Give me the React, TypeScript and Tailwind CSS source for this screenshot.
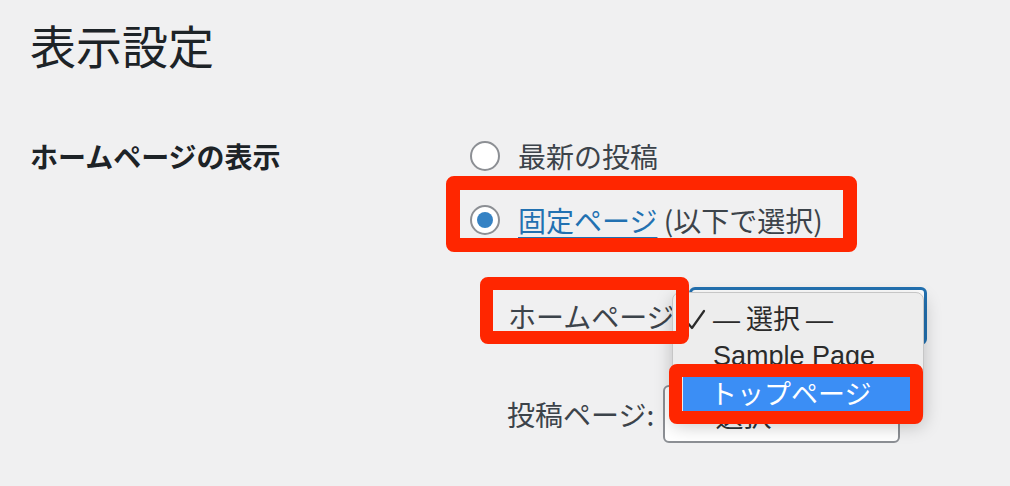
import React from 'react';

const jp = { fontFamily: '"Noto Sans CJK JP", "Noto Sans", sans-serif' };
const menuFont = { fontFamily: '"Liberation Sans", "Noto Sans CJK JP", sans-serif' };

const Radio = ({ checked }: { checked?: boolean }) => (
  <span className="flex h-[30px] w-[30px] shrink-0 items-center justify-center rounded-full border-2 border-[#8c8f94] bg-white">
    {checked && <span className="h-[16px] w-[16px] rounded-full bg-[#3582c4]" />}
  </span>
);

const Highlight = ({ className }: { className: string }) => (
  <div className={`pointer-events-none absolute rounded-[8px] border-[#ff2600] ${className}`} />
);

// full-width dash, as the mac system font draws it
const Dash = () => <span className="font-['Liberation_Sans']">—</span>;

const Choose = () => (
  <span className="whitespace-pre">
    <Dash /> 選択 <Dash />
  </span>
);

export default function App() {
  return (
    <div className="relative h-[486px] w-[1010px] overflow-hidden bg-[#f0f0f1] text-[#3c434a]" style={jp}>
      <div className="pl-[30px] pt-[21px]">
        <h1 className="text-[46px] leading-[46px] font-normal text-[#1d2327]">表示設定</h1>

        <div className="mt-[59px] flex">
          <div className="w-[440px] shrink-0 text-[28px] leading-[60px] font-bold text-[#1d2327]">ホームページの表示</div>

          <div className="flex flex-col">
            <label className="flex h-[60px] items-center gap-[18px] text-[28px]">
              <Radio />
              <span>最新の投稿</span>
            </label>
            <label className="flex h-[68px] items-center gap-[18px] text-[28px]">
              <Radio checked />
              <span>
                <a className="text-[#2271b1] underline underline-offset-[5px]">固定ページ</a> (以下で選択)
              </span>
            </label>

            <div className="ml-[38px] mt-[33px] flex items-center gap-[7px] text-[28px]">
              <span>ホームページ:</span>
              <div className="flex h-[58px] w-[238px] items-center rounded-[6px] border-[3px] border-[#2271b1] bg-white pl-[14px]">
                <Choose />
              </div>
            </div>

            <div className="ml-[37px] mt-[40px] flex items-center gap-[9px] text-[28px]">
              <span>投稿ページ:</span>
              <div className="flex h-[58px] w-[237px] items-center rounded-[6px] border-2 border-[#8c8f94] bg-white pl-[16px] pt-[4px] text-[#2c3338]">
                <Choose />
              </div>
            </div>
          </div>
        </div>
      </div>

      {/* open dropdown list */}
      <div
        className="absolute left-[672px] top-[292px] w-[252px] rounded-[8px] border border-[#c6c6c6] bg-[#ededed] pt-[8px] pb-[7px] text-[27px] text-[#2b2b2b] shadow-[0_6px_18px_rgba(0,0,0,0.22)]"
        style={menuFont}
      >
        <div className="relative flex h-[37px] items-center pl-[40px]">
          <svg className="absolute left-[10px] top-[7px]" width="24" height="24" viewBox="0 0 24 24" fill="none">
            <path d="M3 13 L9 20 L21 3" stroke="#2b2b2b" strokeWidth="2.2" strokeLinecap="round" strokeLinejoin="round" />
          </svg>
          <span style={jp}>
            <Choose />
          </span>
        </div>
        <div className="flex h-[37px] items-center pl-[40px]">Sample Page</div>
        <div className="mx-[10px] flex h-[37px] items-center bg-[#3b8ef5] pl-[27px] text-white" style={jp}>
          トップページ
        </div>
      </div>

      <Highlight className="left-[446px] top-[176px] h-[76px] w-[411px] border-[14px]" />
      <Highlight className="left-[480px] top-[277px] h-[67px] w-[209px] border-[13px]" />
      <Highlight className="left-[669px] top-[364px] h-[60px] w-[254px] border-[13px]" />
    </div>
  );
}
